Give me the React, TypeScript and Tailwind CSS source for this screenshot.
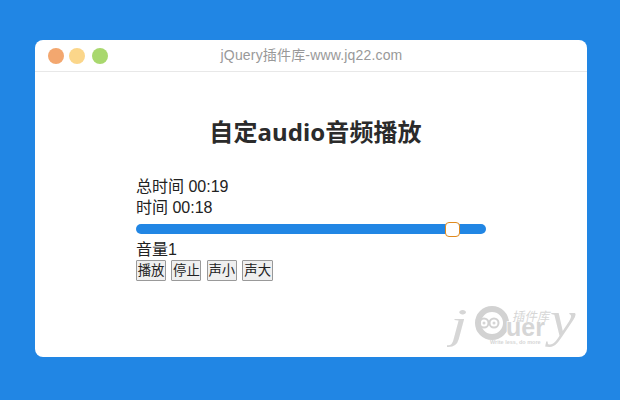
import React from 'react';

const sans = 'font-["Liberation_Sans","Noto_Sans_CJK_SC",sans-serif]';

function Watermark() {
  return (
    <svg className="absolute right-[5px] bottom-[5px]" width="135" height="47" viewBox="0 0 135 47">
      <g fill="#d6d6d6">
        <text transform="translate(3 33) scale(1.5 1)" fontFamily="Liberation Serif" fontStyle="italic" fontSize="42">j</text>
        <circle cx="45" cy="18" r="14" fill="none" stroke="#d2d2d2" strokeWidth="6" />
        <circle cx="37" cy="18" r="4.5" fill="none" stroke="#d2d2d2" strokeWidth="2" />
        <circle cx="47" cy="18" r="4.5" fill="none" stroke="#d2d2d2" strokeWidth="2" />
        <circle cx="37" cy="18" r="1.5" />
        <circle cx="47" cy="18" r="1.5" />
        <text x="59" y="31" fontFamily="Liberation Sans" fontWeight="700" fontSize="25" stroke="#fff" strokeWidth="1.5" paintOrder="stroke">uer</text>
        <text transform="translate(65 16) skewX(-12)" fontFamily="Noto Sans CJK SC" fontSize="12.5">插件库</text>
        <text transform="translate(103 31) scale(1.15 1)" fontFamily="Liberation Serif" fontStyle="italic" fontSize="50">y</text>
        <text x="43" y="38.5" fontFamily="Liberation Sans" fontWeight="700" fontSize="5.5">Write less, do more</text>
      </g>
    </svg>
  );
}

function Btn({ label, wide }: { label: string; wide?: boolean }) {
  return (
    <button className={`h-[21px] ${wide ? 'w-[31px]' : 'w-[30px]'} bg-[#efefef] border border-[#999] rounded-[1px] text-[13.33px] leading-[19px] text-[#222] text-center p-0`}>
      {label}
    </button>
  );
}

export default function App() {
  return (
    <div className={`h-[400px] w-[620px] bg-[#2186e4] pt-[40px] pl-[35px] ${sans}`}>
      <div className="relative h-[317px] w-[552px] bg-white rounded-[8px] overflow-hidden">
        {/* Title bar */}
        <div className="relative h-[32px] border-b border-[#e8e8e8] flex items-center pl-[13px] gap-[5px]">
          <span className="w-[16px] h-[16px] rounded-full bg-[#f3a76f]" />
          <span className="w-[16px] h-[16px] rounded-full bg-[#fbd68a]" />
          <span className="w-[16px] h-[16px] rounded-full bg-[#a9d86e] ml-[2px]" />
          <span className="absolute left-[1px] right-0 text-center text-[14px] tracking-[0.17px] text-[#999]">jQuery插件库-www.jq22.com</span>
        </div>

        <h1 className='mt-[44px] pl-[9px] text-center text-[24px] leading-[32px] font-bold tracking-[0.1px] text-[#2b2b2b] font-["Noto_Sans","Noto_Sans_CJK_SC",sans-serif]'>自定audio音频播放</h1>

        <div className="mt-[28px] ml-[101px] w-[350px] text-[16px] leading-[21px] text-[#222]">
          <div>总时间 00:19</div>
          <div>时间 00:18</div>
          <div className="relative mt-[6px] h-[10px] rounded-full bg-[#2186e4]">
            <div className="absolute left-[309px] top-[-2px] w-[15px] h-[15px] bg-white border-[1.5px] border-[#e08a1e] rounded-[4px]" />
          </div>
          <div className="mt-[5px]">音量1</div>
          <div className="flex gap-[5.4px]">
            <Btn label="播放" />
            <Btn label="停止" />
            <Btn label="声小" />
            <Btn label="声大" wide />
          </div>
        </div>

        <Watermark />
      </div>
    </div>
  );
}
